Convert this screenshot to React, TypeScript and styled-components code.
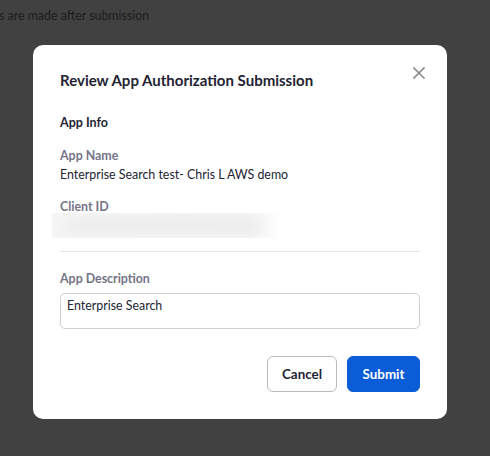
import React, { useEffect, useRef } from 'react';
import styled, { createGlobalStyle } from 'styled-components';

const GlobalStyle = createGlobalStyle`
  html, body {
    margin: 0;
    padding: 0;
    background: #414141;
    overflow: hidden;
  }
  * {
    box-sizing: border-box;
  }
`;

export default function App() {
  const descRef = useRef<HTMLTextAreaElement>(null);

  // put the caret at the end of the description, like the user just typed it
  useEffect(() => {
    const el = descRef.current;
    if (el) {
      el.focus();
      el.setSelectionRange(el.value.length, el.value.length);
    }
  }, []);

  return (
    <>
      <GlobalStyle />
      <Page>
        <PageNote>s are made after submission</PageNote>
      </Page>
      <Backdrop>
        <Dialog role="dialog" aria-labelledby="review-title">
          <CloseButton aria-label="Close">
            <svg width="12" height="12" viewBox="0 0 12 12">
              <path d="M1 1 L11 11 M11 1 L1 11" stroke="#8a8a8a" strokeWidth="1.6" strokeLinecap="square" />
            </svg>
          </CloseButton>
          <Title id="review-title">Review App Authorization Submission</Title>

          <Section>
            <SectionTitle>App Info</SectionTitle>
            <Field>
              <Label>App Name</Label>
              <Value>Enterprise Search test- Chris L AWS demo</Value>
            </Field>
            <Field>
              <Label>Client ID</Label>
              <Redacted>
                <RedactedText />
              </Redacted>
            </Field>
          </Section>

          <Divider />

          <Label>App Description</Label>
          <DescriptionBox ref={descRef} defaultValue="Enterprise Search" />

          <Footer>
            <Button width={70}>Cancel</Button>
            <Button width={73} primary>
              Submit
            </Button>
          </Footer>
        </Dialog>
      </Backdrop>
    </>
  );
}

const Page = styled.div({
  height: '456px',
  padding: '7px 0 0 0',
});

const PageNote = styled.div({
  fontFamily: 'Lato, "Noto Sans", sans-serif',
  fontSize: '12.4px',
  lineHeight: '18px',
  color: '#1c1c1c',
  marginLeft: '-1px',
});

const Backdrop = styled.div({
  position: 'fixed',
  inset: 0,
  display: 'flex',
  alignItems: 'flex-start',
  justifyContent: 'flex-start',
  padding: '45px 0 0 33px',
});

const Dialog = styled.div({
  position: 'relative',
  width: '414px',
  height: '374px',
  background: '#fff',
  borderRadius: '10px',
  padding: '25px 27px 27px 27px',
  display: 'flex',
  flexDirection: 'column',
  fontFamily: 'Lato, "Noto Sans", sans-serif',
  color: '#232333',
});

const CloseButton = styled.button({
  position: 'absolute',
  top: '20px',
  right: '20px',
  width: '16px',
  height: '16px',
  padding: 0,
  border: 'none',
  background: 'transparent',
  display: 'flex',
  alignItems: 'center',
  justifyContent: 'center',
  cursor: 'pointer',
});

const Title = styled.h2({
  margin: 0,
  fontSize: '15px',
  fontWeight: 700,
  lineHeight: '21px',
  color: '#232333',
});

const Section = styled.div({
  display: 'flex',
  flexDirection: 'column',
  marginTop: '23px',
});

const SectionTitle = styled.div({
  fontSize: '12.5px',
  fontWeight: 700,
  lineHeight: '18px',
  color: '#232333',
  marginBottom: '15px',
});

const Field = styled.div({
  display: 'flex',
  flexDirection: 'column',
  marginBottom: '14px',
  '&:last-child': {
    marginBottom: 0,
  },
});

const Label = styled.div({
  fontSize: '12.4px',
  fontWeight: 700,
  lineHeight: '18px',
  color: '#747487',
});

const Value = styled.div({
  fontSize: '12.4px',
  lineHeight: '18px',
  color: '#232333',
  marginTop: '1px',
});

const Redacted = styled.div({
  marginLeft: '-8px',
  marginTop: '-3px',
  width: '228px',
  height: '25px',
  background: 'linear-gradient(90deg, #f5f5f5 0%, #f4f4f4 86%, #ffffff 100%)',
  overflow: 'hidden',
  display: 'flex',
  alignItems: 'center',
  paddingLeft: '12px',
});

const RedactedText = styled.div({
  width: '200px',
  height: '12px',
  borderRadius: '6px',
  background: '#ebebeb',
  filter: 'blur(6px)',
});

const Divider = styled.hr({
  margin: '13px 0 18px 0',
  border: 'none',
  borderTop: '1px solid #e6e6e6',
  width: '100%',
});

const DescriptionBox = styled.textarea({
  marginTop: '5px',
  width: '100%',
  height: '36px',
  resize: 'none',
  border: '1px solid #cfcfd4',
  borderRadius: '5px',
  padding: '3px 6px',
  fontFamily: 'Lato, "Noto Sans", sans-serif',
  fontSize: '12.4px',
  lineHeight: '18px',
  color: '#232333',
  caretColor: '#000',
  outline: 'none',
});

const Footer = styled.div({
  marginTop: 'auto',
  display: 'flex',
  justifyContent: 'flex-end',
  gap: '10px',
});

const Button = styled.button<{ primary?: boolean; width: number }>((p) => ({
  height: '36px',
  width: `${p.width}px`,
  padding: 0,
  borderRadius: '6px',
  border: p.primary ? '1px solid #0b5cd7' : '1px solid #bababa',
  background: p.primary ? '#0b5cd7' : '#fff',
  color: p.primary ? '#fff' : '#232333',
  fontFamily: 'Lato, "Noto Sans", sans-serif',
  fontSize: '13.4px',
  fontWeight: 700,
  cursor: 'pointer',
}));
